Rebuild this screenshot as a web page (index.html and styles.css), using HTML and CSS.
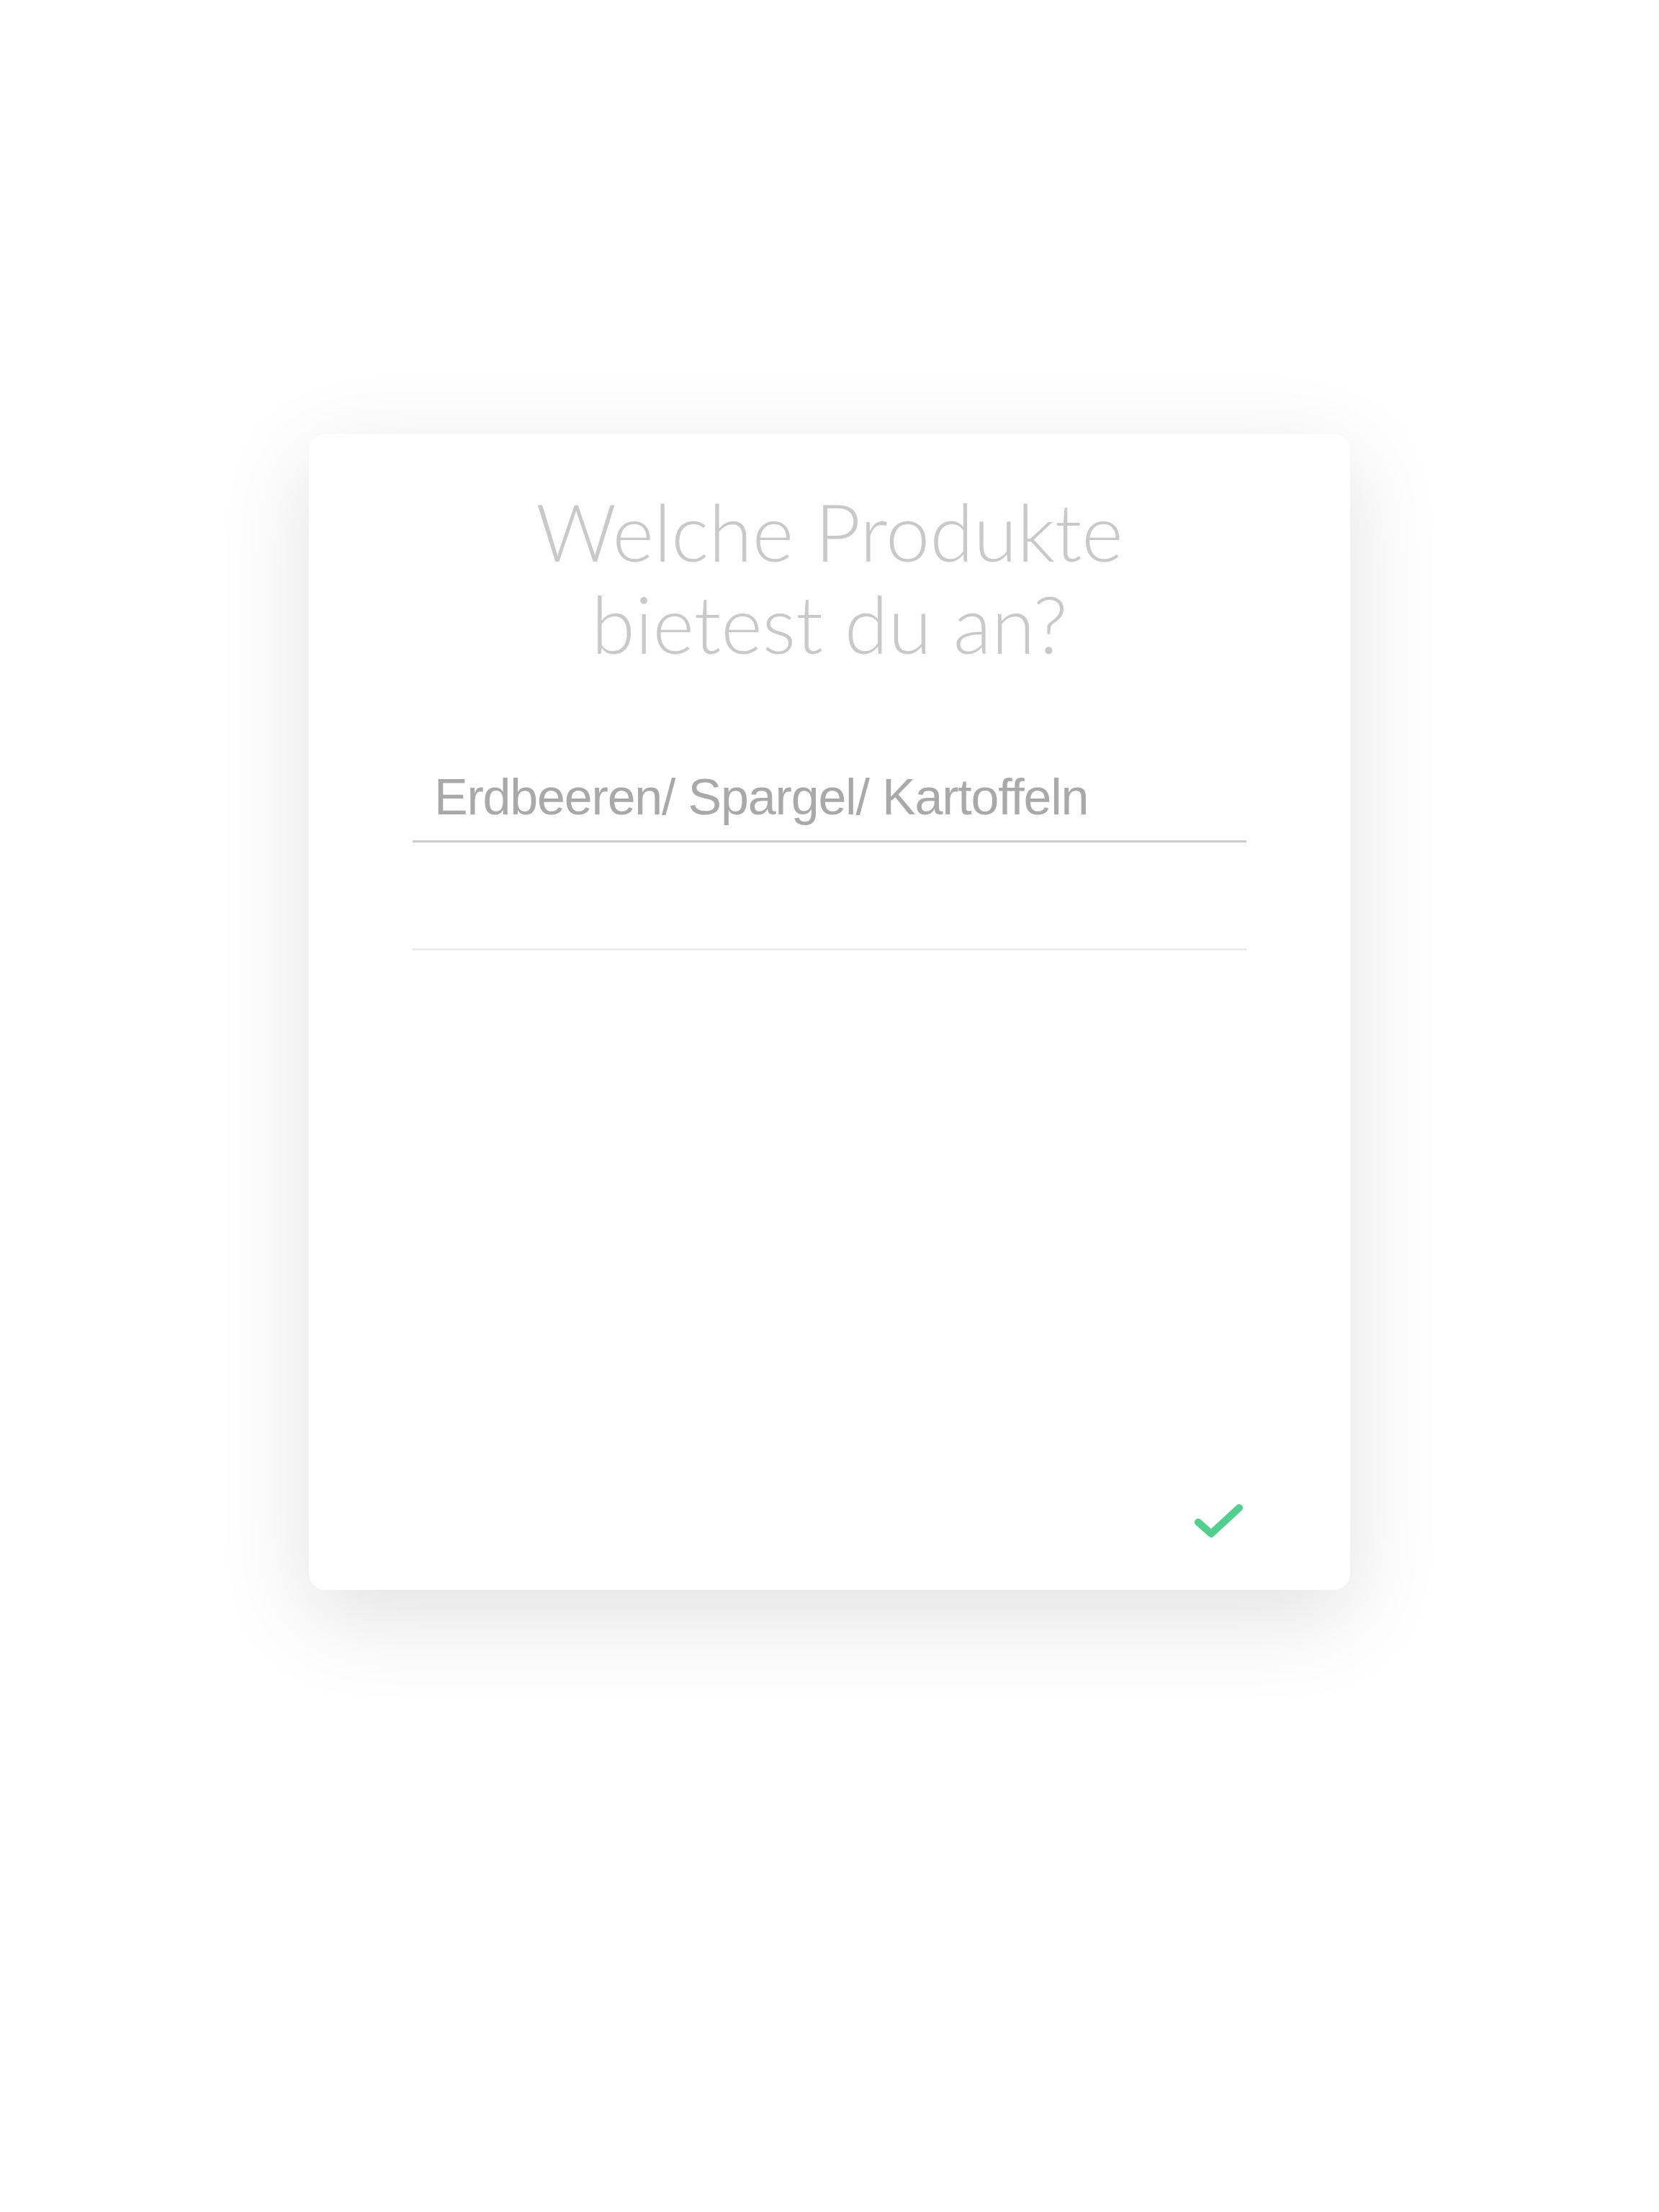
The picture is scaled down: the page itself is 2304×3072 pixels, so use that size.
FILE: index.html
```html
<!DOCTYPE html>
<html lang="de">
<head>
<meta charset="utf-8">
<title>Welche Produkte bietest du an?</title>
<link rel="stylesheet" href="styles.css">
</head>
<body>
<main class="page">
  <section class="card">
    <h1 class="title">Welche Produkte<br>bietest du an?</h1>
    <div class="fields">
      <div class="field field-filled"><span class="field-text">Erdbeeren/ Spargel/ Kartoffeln</span></div>
      <div class="field field-empty"></div>
    </div>
    <div class="actions">
      <button class="confirm" aria-label="Bestätigen">
        <svg width="80" height="60" viewBox="0 0 80 60"><path d="M9 32 L27 48 L66 12" fill="none" stroke="#52cf8f" stroke-width="10" stroke-linecap="round" stroke-linejoin="round"/></svg>
      </button>
    </div>
  </section>
</main>
</body>
</html>
```
FILE: styles.css
```css
html, body {
  margin: 0;
  padding: 0;
  background: #ffffff;
}
.page {
  width: 2304px;
  height: 3072px;
  display: flex;
  justify-content: center;
  align-items: flex-start;
  padding-top: 603px;
  box-sizing: border-box;
}
.card {
  width: 1446px;
  height: 1605px;
  background: #ffffff;
  border-radius: 22px;
  box-shadow: 0 36px 130px rgba(0, 0, 0, 0.12);
  display: flex;
  flex-direction: column;
  box-sizing: border-box;
  padding: 70px 144px 0 144px;
}
.title {
  margin: 0;
  font-family: "Lato", "Nunito", "Open Sans", sans-serif;
  font-weight: 300;
  font-size: 110px;
  line-height: 128px;
  color: #c9c9c9;
  text-align: center;
}
.fields {
  margin-top: 137px;
  display: flex;
  flex-direction: column;
}
.field {
  box-sizing: border-box;
  height: 150px;
  display: flex;
  align-items: flex-end;
  padding: 0 30px 20px 30px;
}
.field-filled {
  height: 104px;
  border-bottom: 3px solid #cccccc;
}
.field-empty {
  border-bottom: 3px solid #ebebeb;
}
.field-text {
  font-family: "Liberation Sans", Arial, sans-serif;
  font-size: 70px;
  line-height: 80px;
  color: #a9a9a9;
  letter-spacing: -1.2px;
}
.actions {
  margin-top: auto;
  display: flex;
  justify-content: flex-end;
  padding: 0 0 66px 0;
}
.confirm {
  border: 0;
  background: transparent;
  padding: 0;
  margin-right: -4px;
  width: 80px;
  height: 60px;
  display: block;
}
.confirm svg {
  display: block;
}
```
